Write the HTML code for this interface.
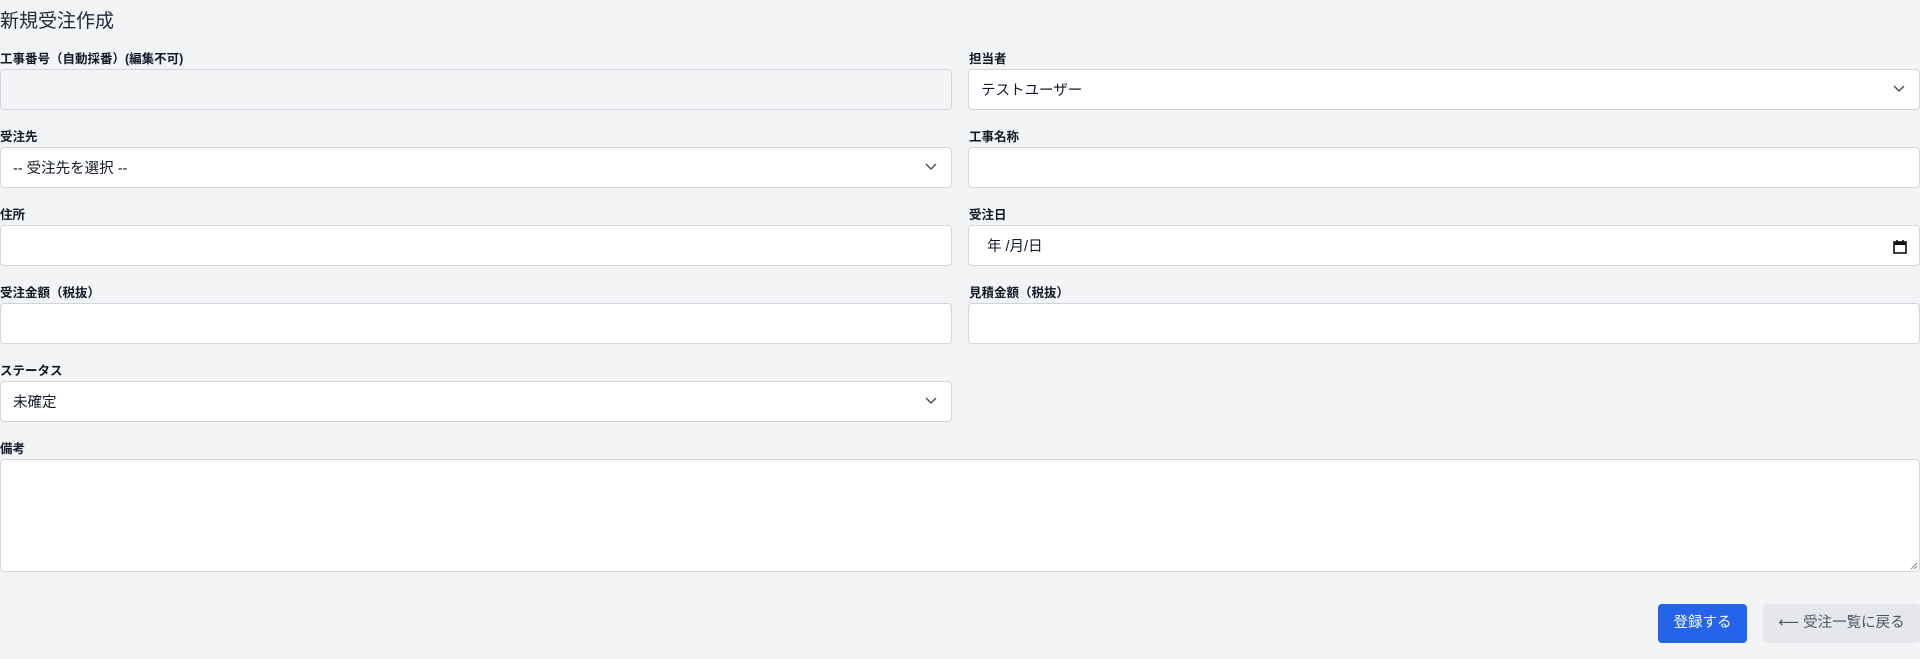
<!DOCTYPE html>
<html><head><meta charset="utf-8"><style>
*{box-sizing:border-box;margin:0;padding:0}
body{width:1920px;height:659px;background:#f3f4f6;font-family:"Liberation Sans","Noto Sans CJK JP",sans-serif;color:#111827;position:relative;overflow:hidden}
.t{position:absolute;left:0;top:6px;font-size:19px;color:#1f2937}
.l{position:absolute;font-size:12.5px;font-weight:bold;color:#111827}
.i{position:absolute;height:41px;background:#fff;border:1px solid #d1d5db;border-radius:4px;font-size:14.5px;padding:1px 12px 0;line-height:40px;color:#111827}
.d{background:#f3f4f6}
.c{position:absolute;right:14px;top:15px}
.b{position:absolute;top:604px;height:39px;border-radius:4px;font-size:14.5px;line-height:39px;text-align:center}
</style></head><body>
<div class="t">新規受注作成</div>

<div class="l" style="left:0;top:48px">工事番号（自動採番）(編集不可)</div>
<div class="i d" style="left:0;top:69px;width:952px"></div>
<div class="l" style="left:969px;top:48px">担当者</div>
<div class="i" style="left:968px;top:69px;width:952px">テストユーザー<svg class="c" width="12" height="8" viewBox="0 0 12 8"><path d="M1 1l5 5 5-5" fill="none" stroke="#4b5563" stroke-width="1.5"/></svg></div>

<div class="l" style="left:0;top:126px">受注先</div>
<div class="i" style="left:0;top:147px;width:952px">-- 受注先を選択 --<svg class="c" width="12" height="8" viewBox="0 0 12 8"><path d="M1 1l5 5 5-5" fill="none" stroke="#4b5563" stroke-width="1.5"/></svg></div>
<div class="l" style="left:969px;top:126px">工事名称</div>
<div class="i" style="left:968px;top:147px;width:952px"></div>

<div class="l" style="left:0;top:204px">住所</div>
<div class="i" style="left:0;top:225px;width:952px"></div>
<div class="l" style="left:969px;top:204px">受注日</div>
<div class="i" style="left:968px;top:225px;width:952px;padding-left:18px">年 /月/日<svg style="position:absolute;right:12px;top:13px" width="14" height="15" viewBox="0 0 14 15"><rect x="1" y="3" width="12" height="11" fill="none" stroke="#111" stroke-width="1.6"/><rect x="1" y="3" width="12" height="3" fill="#111"/><path d="M4 1v3M10 1v3" stroke="#111" stroke-width="1.6"/></svg></div>

<div class="l" style="left:0;top:282px">受注金額（税抜）</div>
<div class="i" style="left:0;top:303px;width:952px"></div>
<div class="l" style="left:969px;top:282px">見積金額（税抜）</div>
<div class="i" style="left:968px;top:303px;width:952px"></div>

<div class="l" style="left:0;top:360px">ステータス</div>
<div class="i" style="left:0;top:381px;width:952px">未確定<svg class="c" width="12" height="8" viewBox="0 0 12 8"><path d="M1 1l5 5 5-5" fill="none" stroke="#4b5563" stroke-width="1.5"/></svg></div>

<div class="l" style="left:0;top:438px">備考</div>
<div class="i" style="left:0;top:459px;width:1920px;height:113px"><svg style="position:absolute;right:1px;bottom:1px" width="8" height="8" viewBox="0 0 8 8"><path d="M7 1L1 7M7 4L4 7" stroke="#888" stroke-width="1"/></svg></div>

<div class="b" style="left:1658px;width:89px;background:#2563eb;color:#fff">登録する</div>
<div class="b" style="left:1763px;width:157px;background:#e5e7eb;color:#4b5563"><span style="font-family:'DejaVu Sans',sans-serif">⟵</span> 受注一覧に戻る</div>
</body></html>
